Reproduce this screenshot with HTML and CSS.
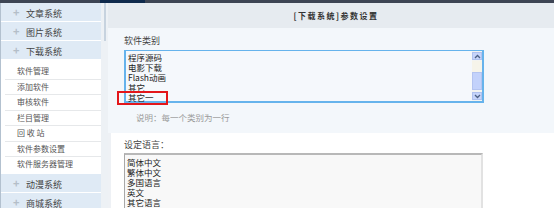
FILE: index.html
```html
<!DOCTYPE html>
<html lang="zh-CN">
<head>
    <meta charset="UTF-8">
    <title>下载系统参数设置</title>
    <link rel="stylesheet" href="styles.css">
</head>
<body>

    <!-- Barra superior -->
    <div class="topbar">
        <div class="topbar-left"></div>
        <div class="topbar-tab"></div>
        <div class="topbar-rest"></div>
    </div>

    <div class="frame">
        <!-- Menu lateral -->
        <div class="sidebar">
            <div class="menu-head"><span class="plus">+</span>文章系统</div>
            <div class="menu-head"><span class="plus">+</span>图片系统</div>
            <div class="menu-head"><span class="plus">+</span>下载系统</div>
            <ul class="menu-list">
                <li>软件管理</li>
                <li>添加软件</li>
                <li>审核软件</li>
                <li>栏目管理</li>
                <li>回 收 站</li>
                <li>软件参数设置</li>
                <li>软件服务器管理</li>
            </ul>
            <div class="menu-head"><span class="plus">+</span>动漫系统</div>
            <div class="menu-head"><span class="plus">+</span>商城系统</div>
        </div>

        <div class="splitter"><div class="splitter-bar"></div></div>

        <!-- Contenido -->
        <div class="main">
            <div class="main-title">[下载系统]参数设置</div>

            <div class="section-blue">
                <div class="field-label">软件类别</div>
                <div class="textbox textbox-blue">
                    <div class="textbox-lines">
                        <div>程序源码</div>
                        <div>电影下载</div>
                        <div>Flash动画</div>
                        <div>其它</div>
                        <div>其它一</div>
                    </div>
                    <div class="scrollbar">
                        <div class="scroll-btn">
                            <svg width="7" height="5" viewBox="0 0 7 5"><path d="M1 4 L3.5 1.5 L6 4" fill="none" stroke="#4d6185" stroke-width="1.3"/></svg>
                        </div>
                        <div class="scroll-track"></div>
                        <div class="scroll-thumb"></div>
                        <div class="scroll-btn">
                            <svg width="7" height="5" viewBox="0 0 7 5"><path d="M1 1 L3.5 3.5 L6 1" fill="none" stroke="#4d6185" stroke-width="1.3"/></svg>
                        </div>
                    </div>
                    <div class="highlight"></div>
                </div>
                <div class="hint">说明：每一个类别为一行</div>
            </div>

            <div class="section-white">
                <div class="field-label">设定语言：</div>
                <div class="textbox textbox-gray">
                    <div class="textbox-lines">
                        <div>简体中文</div>
                        <div>繁体中文</div>
                        <div>多国语言</div>
                        <div>英文</div>
                        <div>其它语言</div>
                    </div>
                </div>
            </div>
        </div>
    </div>

</body>
</html>
```

FILE: styles.css
```css
body {
    margin: 0;
    width: 554px;
    height: 208px;
    overflow: hidden;
    font-family: "Noto Sans CJK SC", "Noto Sans", sans-serif;
    background: #eef1f5;
    color: #333;
}

/* Barra superior */
.topbar {
    display: flex;
    height: 3px;
}

.topbar-left {
    width: 100px;
    background: #3d4554;
}

.topbar-tab {
    width: 45px;
    background: #0f2a4c;
}

.topbar-rest {
    flex: 1;
    background: #3d4554;
}

.frame {
    display: flex;
    height: 205px;
    overflow: hidden;
}

/* Menu lateral */
.sidebar {
    width: 100px;
    border-left: 1px solid #b3c1cf;
    background: #fff;
    flex-shrink: 0;
}

.menu-head {
    height: 18px;
    line-height: 18px;
    background: #dfeaf5;
    border-bottom: 1px solid #fff;
    font-size: 9px;
    color: #444;
    padding-left: 12px;
}

.plus {
    display: inline-block;
    width: 13px;
    color: #b4bec8;
    font-size: 11px;
    font-weight: bold;
}

.menu-list {
    list-style: none;
    margin: 0;
    padding: 4px 0 2px 0;
}

.menu-list li {
    height: 14.5px;
    line-height: 14.5px;
    border-bottom: 1px solid #e6e8ea;
    margin-left: 4px;
    padding-left: 12px;
    font-size: 8px;
    color: #555;
}

.menu-list li:last-child {
    border-bottom: none;
}

.splitter {
    width: 7px;
    flex-shrink: 0;
    background: #edf1f5;
}

.splitter-bar {
    margin-left: 3px;
    width: 2px;
    height: 38px;
    background: #c7d3df;
}

/* Contenido */
.main {
    flex: 1;
}

.main-title {
    height: 25px;
    line-height: 25px;
    background: #e6ebf0;
    text-align: center;
    font-size: 8px;
    font-weight: bold;
    letter-spacing: 1.5px;
    color: #333;
    padding-left: 10px;
}

.section-blue {
    height: 98px;
    background: #f3f7fb;
    padding: 7px 0 0 16px;
}

.section-white {
    height: 100px;
    background: #fff;
    margin-left: 3px;
    padding: 6px 0 0 13px;
}

.field-label {
    font-size: 9px;
    line-height: 12px;
    color: #444;
    margin-bottom: 3px;
}

.section-white .field-label {
    margin-bottom: 2px;
}

.textbox {
    position: relative;
    width: 356px;
    display: flex;
    font-size: 8.5px;
    color: #222;
}

.textbox-blue {
    height: 50px;
    border: 2px solid #66b3ec;
    border-top-width: 1.5px;
    background: #f5f8fc;
}

.textbox-gray {
    height: 70px;
    border: 1px solid #ddd;
    border-top: 2px solid #b8b8b8;
    border-left: 1px solid #a8a8a8;
    border-right: 2px solid #e2e2e2;
    background: #f8f8f8;
}

.textbox-lines {
    flex: 1;
    padding: 1px 0 0 2px;
    line-height: 10px;
}

.textbox-gray .textbox-lines {
    padding-top: 2px;
}

/* Barra de desplazamiento */
.scrollbar {
    width: 10px;
    display: flex;
    flex-direction: column;
    background: #f4f4f0;
}

.scroll-btn {
    height: 8px;
    margin: 1px 0;
    background: #c6d4fa;
    border: 1px solid #b0c2ef;
    box-sizing: border-box;
    display: flex;
    align-items: center;
    justify-content: center;
}

.scroll-track {
    height: 11px;
    background: #f6f4ea;
}

.scroll-thumb {
    flex: 1;
    margin-bottom: 1px;
    background: #c3d2fb;
    border: 1px solid #b4c4f0;
}

.highlight {
    position: absolute;
    left: -9px;
    top: 40px;
    width: 47px;
    height: 10px;
    border: 2px solid #e3161a;
}

.hint {
    margin-top: 8px;
    padding-left: 12px;
    font-size: 8.5px;
    color: #9a9a9a;
}
```
